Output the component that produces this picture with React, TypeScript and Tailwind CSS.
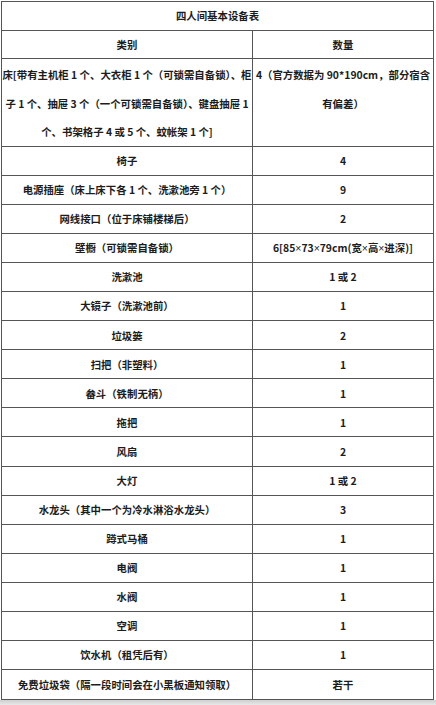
import type { ReactNode } from "react"

const X = () => <span className="font-['Liberation_Sans'] font-normal">×</span>

const rows: [string, ReactNode][] = [
  ["椅子", "4"],
  ["电源插座（床上床下各 1 个、洗漱池旁 1 个）", "9"],
  ["网线接口（位于床铺楼梯后）", "2"],
  [
    "壁橱（可锁需自备锁）",
    <>
      6[85<X />73<X />79cm(宽<X />高<X />进深)]
    </>,
  ],
  ["洗漱池", "1 或 2"],
  ["大镜子（洗漱池前）", "1"],
  ["垃圾篓", "2"],
  ["扫把（非塑料）", "1"],
  ["畚斗（铁制无柄）", "1"],
  ["拖把", "1"],
  ["风扇", "2"],
  ["大灯", "1 或 2"],
  ["水龙头（其中一个为冷水淋浴水龙头）", "3"],
  ["蹲式马桶", "1"],
  ["电阀", "1"],
  ["水阀", "1"],
  ["空调", "1"],
  ["饮水机（租凭后有）", "1"],
  ["免费垃圾袋（隔一段时间会在小黑板通知领取）", "若干"],
]

export default function App() {
  return (
    <div
      className="w-[436px] h-[705px] bg-white overflow-hidden text-[#1c1c1c] text-[10.4px] font-bold"
      style={{ fontFamily: '"Noto Sans CJK SC", "Noto Sans", sans-serif' }}
    >
      <div className="ml-[1px] mt-[1px] w-[433px] border border-[#555]">
        {/* title */}
        <div className="h-[29px] border-b border-[#555] flex items-center justify-center">
          四人间基本设备表
        </div>

        <div className="grid grid-cols-[251px_1fr]">
          {/* header */}
          <div className="h-[28px] border-b border-r border-[#555] flex items-center justify-center">类别</div>
          <div className="h-[28px] border-b border-[#555] flex items-center justify-center">数量</div>

          {/* bed row */}
          <div className="h-[88px] border-b border-r border-[#555] pt-[2px] text-center leading-[28.7px] whitespace-nowrap">
            床[带有主机柜 1 个、大衣柜 1 个（可锁需自备锁）、柜
            <br />
            子 1 个、抽屉 3 个（一个可锁需自备锁）、键盘抽屉 1
            <br />
            个、书架格子 4 或 5 个、蚊帐架 1 个]
          </div>
          <div className="h-[88px] border-b border-[#555] pt-[2px] text-center leading-[28.7px] whitespace-nowrap">
            4（官方数据为 90*190cm，部分宿含
            <br />
            有偏差）
          </div>

          {rows.map(([name, qty], i) => {
            const last = i === rows.length - 1
            return [
              <div
                key={name}
                className={
                  last
                    ? "h-[29.05px] border-r border-[#555] flex items-center justify-center whitespace-nowrap"
                    : "h-[29.05px] border-b border-r border-[#555] flex items-center justify-center whitespace-nowrap"
                }
              >
                {name}
              </div>,
              <div
                key={name + "-q"}
                className={
                  last
                    ? "h-[29.05px] flex items-center justify-center whitespace-nowrap"
                    : "h-[29.05px] border-b border-[#555] flex items-center justify-center whitespace-nowrap"
                }
              >
                <span>{qty}</span>
              </div>,
            ]
          })}
        </div>
      </div>
      <div className="h-[5px] bg-gradient-to-b from-[#cfcfcf] to-[#e8e8e8]" />
    </div>
  )
}
